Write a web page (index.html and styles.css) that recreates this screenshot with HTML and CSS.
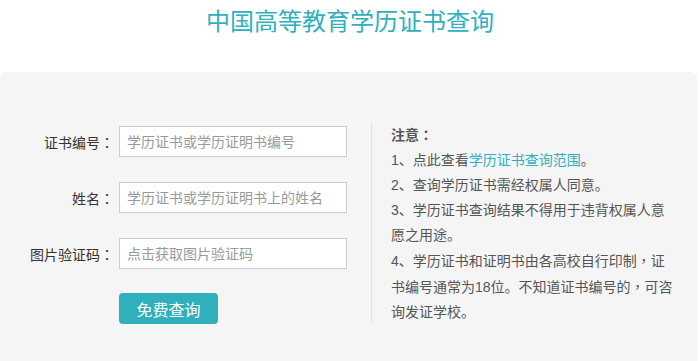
FILE: index.html
```html
<!DOCTYPE html>
<html lang="zh-CN">
<head>
    <meta charset="UTF-8">
    <meta name="viewport" content="width=device-width, initial-scale=1.0">
    <title>中国高等教育学历证书查询</title>
    <link rel="stylesheet" href="styles.css">
</head>
<body>
    <header class="top">
        <h1 class="title">中国高等教育学历证书查询</h1>
    </header>
    <div class="panel">
        <form class="query-form">
            <div class="row">
                <label class="label">证书编号<span class="punc" lang="zh-TW">：</span></label>
                <input class="field" type="text" placeholder="学历证书或学历证明书编号">
            </div>
            <div class="row">
                <label class="label">姓名<span class="punc" lang="zh-TW">：</span></label>
                <input class="field" type="text" placeholder="学历证书或学历证明书上的姓名">
            </div>
            <div class="row">
                <label class="label">图片验证码<span class="punc" lang="zh-TW">：</span></label>
                <input class="field" type="text" placeholder="点击获取图片验证码">
            </div>
            <div class="row">
                <span class="label"></span>
                <button class="btn" type="button">免费查询</button>
            </div>
        </form>
        <div class="notes">
            <p class="notes-head">注意<span class="punc" lang="zh-TW">：</span></p>
            <p>1、点此查看<a href="#">学历证书查询范围</a>。</p>
            <p>2、查询学历证书需经权属人同意。</p>
            <p>3、学历证书查询结果不得用于违背权属人意愿之用途。</p>
            <p>4、学历证书和证明书由各高校自行印制<span class="punc" lang="zh-TW">，</span>证书编号通常为18位。不知道证书编号的<span class="punc" lang="zh-TW">，</span>可咨询发证学校。</p>
        </div>
    </div>
</body>
</html>
```

FILE: styles.css
```css
body {
    margin: 0;
    background: #fff;
    font-family: "Liberation Sans", "Noto Sans CJK SC", sans-serif;
    font-size: 14px;
    color: #333;
}

/* 标题 */
.top {
    height: 72px;
}

.title {
    margin: 0;
    padding-top: 7px;
    line-height: 30px;
    font-size: 24px;
    font-weight: normal;
    text-align: center;
    color: #2eb0be;
}

.panel {
    display: flex;
    margin-right: 3px;
    padding-top: 50px;
    height: 239px;
    background: #f5f5f5;
    border-radius: 6px 6px 0 0;
}

/* 居中的全角标点 */
.punc {
    font-family: "Noto Sans CJK TC", sans-serif;
}

/* 表单 */
.query-form {
    width: 371px;
    padding-top: 4px;
}

.row {
    display: flex;
    align-items: center;
    gap: 5px;
    margin-bottom: 25px;
}

.label {
    width: 114px;
    text-align: right;
    color: #333;
}

.field {
    box-sizing: border-box;
    width: 228px;
    height: 31px;
    padding: 0 7px;
    border: 1px solid #ccc;
    background: #fff;
    font-family: inherit;
    font-size: 14px;
    outline: none;
}

.field::placeholder {
    color: #999;
}

.btn {
    width: 99px;
    height: 31px;
    margin-top: -1px;
    border: none;
    border-radius: 4px;
    background: #2fb0bc;
    color: #fff;
    font-family: inherit;
    font-size: 16px;
    cursor: pointer;
}

/* 注意事项 */
.notes {
    width: 285px;
    height: 200px;
    padding-left: 19px;
    border-left: 1px solid #e2e2e2;
    color: #555;
    line-height: 25px;
}

.notes p {
    margin: 0;
}

.notes-head {
    font-weight: bold;
}

.notes a {
    color: #2eb0be;
    text-decoration: none;
}
```
